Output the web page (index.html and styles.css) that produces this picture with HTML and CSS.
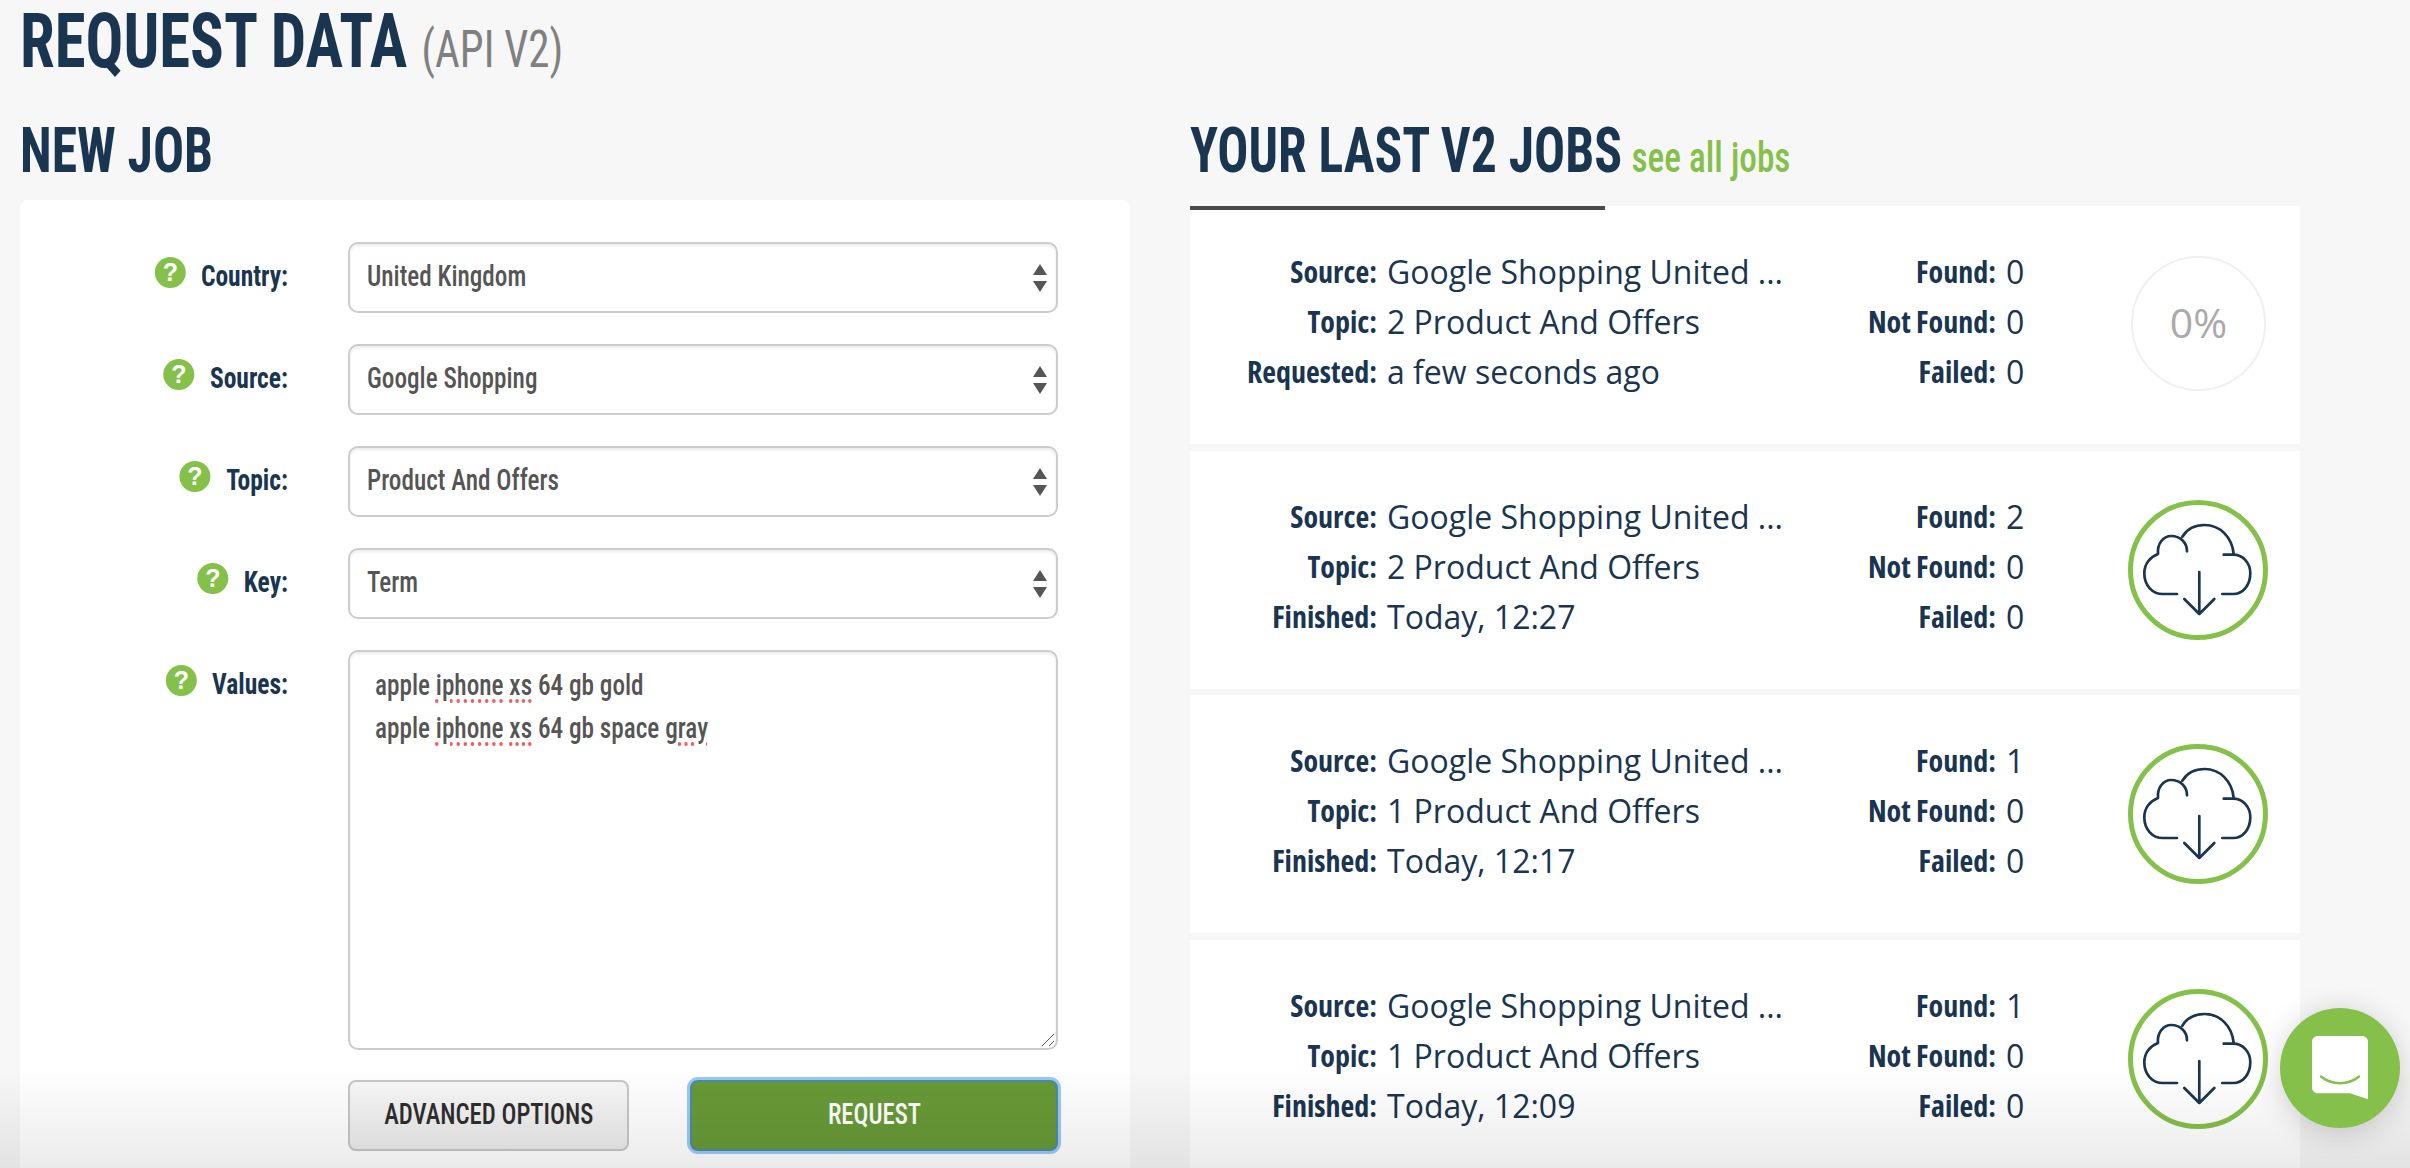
FILE: index.html
```html
<!DOCTYPE html>
<html lang="en">
<head>
    <meta charset="UTF-8">
    <title>Request Data</title>
    <link rel="stylesheet" href="styles.css">
</head>
<body>
    <svg class="icon-defs" width="0" height="0">
        <symbol id="cloud" viewBox="0 0 140 140">
            <path d="M49 94H35C24 94 16.3 85 16.3 73.3C16.3 64 22 57 30 54C29 44 35 36 43.3 36C52 36 59 42 59 51.3M54.3 36.7C59 29 67 25 76.7 25C92 25 104 37 105.7 54M95.7 54.7H105C115 54.7 122.3 63 122.3 73.3C122.3 85 115 94 105 94H94.3M71.3 72V114M56.3 99L71.3 114L86.3 99"/>
        </symbol>
    </svg>

    <div class="page">
        <h1 class="page-title"><span class="squeeze">REQUEST DATA <small>(API V2)</small></span></h1>
        <div class="columns">
            <section>
                <h2 class="section-title"><span class="squeeze">NEW JOB</span></h2>
                <form class="job-form">
                    <div class="form-row">
                        <label class="form-label"><span class="help">?</span>Country:</label>
                        <div class="select-box"><span class="select-value">United Kingdom</span></div>
                    </div>
                    <div class="form-row">
                        <label class="form-label"><span class="help">?</span>Source:</label>
                        <div class="select-box"><span class="select-value">Google Shopping</span></div>
                    </div>
                    <div class="form-row">
                        <label class="form-label"><span class="help">?</span>Topic:</label>
                        <div class="select-box"><span class="select-value">Product And Offers</span></div>
                    </div>
                    <div class="form-row">
                        <label class="form-label"><span class="help">?</span>Key:</label>
                        <div class="select-box"><span class="select-value">Term</span></div>
                    </div>
                    <div class="form-row">
                        <label class="form-label"><span class="help">?</span>Values:</label>
                        <div class="values-box">
                            <div class="value-line">apple <span class="typo">iphone</span> <span class="typo">xs</span> 64 gb gold</div>
                            <div class="value-line">apple <span class="typo">iphone</span> <span class="typo">xs</span> 64 gb space <span class="typo">gray</span></div>
                            <svg class="grip" width="14" height="14" viewBox="0 0 14 14"><path d="M1 13L13 1M8 13L13 8"/></svg>
                        </div>
                    </div>
                    <div class="form-row form-buttons">
                        <div></div>
                        <div class="button-row">
                            <button type="button" class="btn-advanced"><span class="btn-text">ADVANCED OPTIONS</span></button>
                            <button type="button" class="btn-request"><span class="btn-text">REQUEST</span></button>
                        </div>
                    </div>
                </form>
            </section>

            <section>
                <h2 class="section-title jobs-title"><span class="squeeze">YOUR LAST V2 JOBS <a href="#">see all jobs</a></span></h2>
                <div class="jobs">
                    <div class="job">
                        <dl class="job-info">
                            <dt>Source:</dt><dd>Google Shopping United ...</dd>
                            <dt>Topic:</dt><dd>2 Product And Offers</dd>
                            <dt>Requested:</dt><dd>a few seconds ago</dd>
                        </dl>
                        <dl class="job-counts">
                            <dt>Found:</dt><dd>0</dd>
                            <dt>Not Found:</dt><dd>0</dd>
                            <dt>Failed:</dt><dd>0</dd>
                        </dl>
                        <div class="progress">0%</div>
                    </div>
                    <div class="job">
                        <dl class="job-info">
                            <dt>Source:</dt><dd>Google Shopping United ...</dd>
                            <dt>Topic:</dt><dd>2 Product And Offers</dd>
                            <dt>Finished:</dt><dd>Today, 12:27</dd>
                        </dl>
                        <dl class="job-counts">
                            <dt>Found:</dt><dd>2</dd>
                            <dt>Not Found:</dt><dd>0</dd>
                            <dt>Failed:</dt><dd>0</dd>
                        </dl>
                        <a class="download" href="#"><svg width="140" height="140"><use href="#cloud"/></svg></a>
                    </div>
                    <div class="job">
                        <dl class="job-info">
                            <dt>Source:</dt><dd>Google Shopping United ...</dd>
                            <dt>Topic:</dt><dd>1 Product And Offers</dd>
                            <dt>Finished:</dt><dd>Today, 12:17</dd>
                        </dl>
                        <dl class="job-counts">
                            <dt>Found:</dt><dd>1</dd>
                            <dt>Not Found:</dt><dd>0</dd>
                            <dt>Failed:</dt><dd>0</dd>
                        </dl>
                        <a class="download" href="#"><svg width="140" height="140"><use href="#cloud"/></svg></a>
                    </div>
                    <div class="job">
                        <dl class="job-info">
                            <dt>Source:</dt><dd>Google Shopping United ...</dd>
                            <dt>Topic:</dt><dd>1 Product And Offers</dd>
                            <dt>Finished:</dt><dd>Today, 12:09</dd>
                        </dl>
                        <dl class="job-counts">
                            <dt>Found:</dt><dd>1</dd>
                            <dt>Not Found:</dt><dd>0</dd>
                            <dt>Failed:</dt><dd>0</dd>
                        </dl>
                        <a class="download" href="#"><svg width="140" height="140"><use href="#cloud"/></svg></a>
                    </div>
                </div>
            </section>
        </div>
    </div>

    <div class="bottom-fade"></div>
    <a class="chat" href="#">
        <svg width="120" height="120" viewBox="0 0 120 120">
            <path class="chat-bubble" d="M38 28H82C85.5 28 88 30.500 88 34V91.300L70 85.300H38C34.500 85.300 32 82.800 32 79.300V34C32 30.500 34.500 28 38 28Z"/>
            <path class="chat-smile" d="M41 68.500C52 77.500 68 77.500 79 68.500"/>
        </svg>
    </a>
</body>
</html>
```

FILE: styles.css
```css
html, body {
    height: 100%;
}
body {
    margin: 0;
    background: #f7f7f7;
    font-family: 'Open Sans', sans-serif;
    color: #1a3550;
    overflow: hidden;
}
.icon-defs {
    display: none;
}
.page {
    padding: 0 110px 0 20px;
}
.squeeze {
    display: inline-block;
    white-space: nowrap;
    transform: scaleX(0.82);
    transform-origin: left center;
}
.page-title, .section-title {
    font-family: 'Roboto Condensed', sans-serif;
    font-weight: 700;
    margin: 0;
}
.page-title {
    height: 80px;
    font-size: 76px;
    line-height: 82px;
}
.page-title .squeeze {
    transform: scaleX(0.826);
}
.page-title small {
    font-size: 52px;
    line-height: 1;
    font-weight: 400;
    color: #808080;
}
.columns {
    display: grid;
    grid-template-columns: 1110px 1110px;
    column-gap: 60px;
    margin-top: 28px;
}
.section-title {
    height: 85px;
    margin-bottom: 7px;
    font-size: 63px;
    line-height: 85px;
}
.jobs-title {
    margin-bottom: 13px;
}
.jobs-title a {
    margin-left: -3px;
    font-size: 43px;
    line-height: 1;
    font-weight: 500;
    color: #85c04a;
    text-decoration: none;
}
.job-form {
    background: #fff;
    border-radius: 8px;
    padding: 42px 72px 60px 0;
}
.form-row {
    display: grid;
    grid-template-columns: 268px 710px;
    column-gap: 60px;
    margin-bottom: 31px;
}
.form-label {
    display: flex;
    justify-content: flex-end;
    align-items: center;
    gap: 21px;
    height: 66px;
    transform: scaleX(0.85);
    transform-origin: right center;
    font-family: 'Roboto Condensed', sans-serif;
    font-weight: 700;
    font-size: 30px;
}
.help {
    width: 31px;
    height: 31px;
    margin-top: -6px;
    border-radius: 50%;
    transform: scaleX(1.176);
    background: #85c04a;
    color: #fff;
    font-family: 'Liberation Sans', sans-serif;
    font-weight: 700;
    font-size: 25px;
    line-height: 31px;
    text-align: center;
}
.select-box {
    position: relative;
    box-sizing: border-box;
    height: 71px;
    padding: 0 17px;
    background: #fff;
    border: 2px solid #ccc;
    border-radius: 10px;
    box-shadow: inset 0 2px 3px rgba(0, 0, 0, 0.08);
    font-family: 'Roboto Condensed', sans-serif;
    font-weight: 500;
    font-size: 30px;
    line-height: 64px;
    color: #555;
}
.select-value {
    display: block;
    white-space: nowrap;
    transform: scaleX(0.84);
    transform-origin: left center;
}
.value-line {
    white-space: nowrap;
    transform: scaleX(0.87);
    transform-origin: left center;
}
.select-box::before, .select-box::after {
    content: "";
    position: absolute;
    right: 9px;
    border-left: 7px solid transparent;
    border-right: 7px solid transparent;
}
.select-box::before {
    top: 20px;
    border-bottom: 11px solid #555;
}
.select-box::after {
    top: 37px;
    border-top: 11px solid #555;
}
.values-box {
    position: relative;
    box-sizing: border-box;
    height: 400px;
    padding: 12px 25px;
    border: 2px solid #ccc;
    border-radius: 10px;
    box-shadow: inset 0 2px 3px rgba(0, 0, 0, 0.08);
    font-family: 'Roboto Condensed', sans-serif;
    font-size: 29px;
    font-weight: 500;
    line-height: 43px;
    color: #555;
}
.typo {
    text-decoration: underline dotted #f25c5c 4px;
    text-underline-offset: 4px;
}
.grip {
    position: absolute;
    right: 1px;
    bottom: 1px;
    fill: none;
    stroke: #555;
    stroke-width: 1;
}
.form-buttons {
    margin-bottom: 0;
    margin-top: -1px;
}
.button-row {
    display: flex;
    justify-content: space-between;
}
.button-row button {
    height: 71px;
    padding: 0 0 4px;
    font-family: 'Roboto Condensed', sans-serif;
    font-weight: 500;
    font-size: 30px;
    border-radius: 8px;
}
.btn-text {
    display: inline-block;
    white-space: nowrap;
    transform: scaleX(0.825);
}
.btn-advanced {
    width: 281px;
    background: linear-gradient(#f7f7f7, #ebebeb);
    border: 2px solid #c6c6c6;
    color: #2e2e2e;
}
.btn-request {
    width: 368px;
    background: #689a37;
    border: 2px solid #4a8ca8;
    color: #fff;
    box-shadow: 0 0 0 3px #9cc8f5;
}
.jobs {
    position: relative;
}
.jobs::before {
    content: "";
    position: absolute;
    left: 0;
    top: 0;
    width: 415px;
    height: 4px;
    background: #4a4a4a;
}
.job {
    display: flex;
    align-items: center;
    height: 238px;
    margin-bottom: 6.500px;
    background: #fff;
}
.job-info, .job-counts {
    display: grid;
    column-gap: 10px;
    margin: -6px 0 0;
    font-size: 32px;
    line-height: 50px;
}
.job-info {
    grid-template-columns: 187px 395px;
    width: 593px;
}
.job-counts {
    grid-template-columns: 175px 40px;
    margin-left: 38px;
    width: 225px;
}
.job dt {
    font-weight: 700;
    font-stretch: 75%;
    font-size: 30px;
    text-align: right;
}
.job dd {
    margin: 0;
    white-space: nowrap;
}
.progress, .download {
    box-sizing: border-box;
    border-radius: 50%;
    display: flex;
    align-items: center;
    justify-content: center;
}
.progress {
    width: 135px;
    height: 135px;
    margin: -3px 0 0 85px;
    padding-bottom: 3px;
    border: 2px solid #f0f0f0;
    color: #aaa;
    font-size: 41px;
}
.download {
    width: 140px;
    height: 140px;
    margin-left: 82px;
    border: 5px solid #85c04a;
}
.download svg {
    flex: none;
    fill: none;
    stroke: #1a3550;
    stroke-width: 2.700;
    stroke-linecap: round;
    stroke-linejoin: round;
}
.bottom-fade {
    position: fixed;
    left: 0;
    right: 0;
    bottom: 0;
    height: 100px;
    background: linear-gradient(rgba(0, 0, 0, 0), rgba(0, 0, 0, 0.08));
    pointer-events: none;
}
.chat {
    position: fixed;
    left: 2280px;
    top: 1008px;
    width: 120px;
    height: 120px;
    border-radius: 50%;
    background: #85c04a;
    box-shadow: 0 4px 30px rgba(0, 0, 0, 0.18);
}
.chat-bubble {
    fill: #fff;
}
.chat-smile {
    fill: none;
    stroke: #85c04a;
    stroke-width: 2.500;
    stroke-linecap: round;
}
```
